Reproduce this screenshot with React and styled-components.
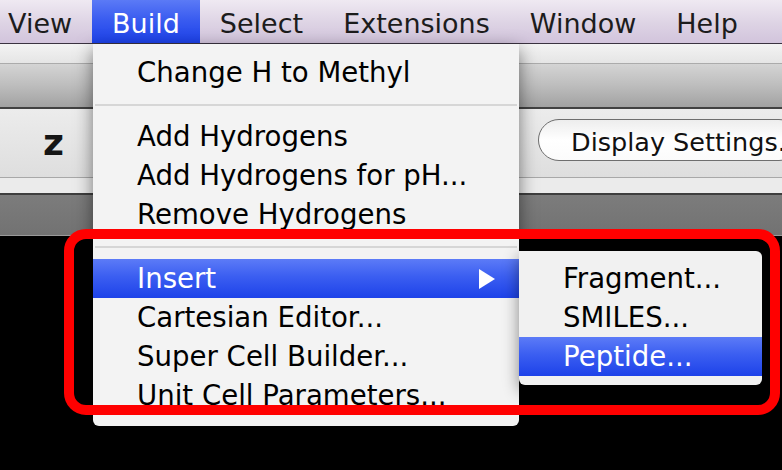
import React from "react";
import styled, { createGlobalStyle } from "styled-components";

const GlobalStyle = createGlobalStyle`
  html, body {
    margin: 0;
    padding: 0;
    background: #000;
  }
  body {
    font-family: "DejaVu Sans", Verdana, sans-serif;
  }
`;

const Screen = styled.div`
  position: relative;
  width: 782px;
  height: 470px;
  overflow: hidden;
  background: #000;
  font-family: "DejaVu Sans", Verdana, sans-serif;
`;

const MenuBar = styled.div`
  display: flex;
  height: 43px;
  border-bottom: 1px solid #3a3240;
  background: linear-gradient(180deg, #efe9f2 0%, #ddd3e4 55%, #d2c4dc 100%);
`;

const MenuTitle = styled.div`
  padding: 4px 20px 0;
  font-size: 27px;
  line-height: 39px;
  white-space: nowrap;
  color: ${(p) => (p.$open ? "#fff" : "#1c1c1c")};
  background: ${(p) =>
    p.$open
      ? "linear-gradient(180deg, #5b7af6 0%, #3a5cf0 45%, #1c41e9 100%)"
      : "transparent"};
  &:first-child {
    padding-left: 8px;
  }
`;

const Window = styled.div`
  display: flex;
  flex-direction: column;
`;

const TitleStrip = styled.div`
  height: 19px;
  background: linear-gradient(180deg, #f3f3f3, #e5e5e5);
  border-bottom: 1px solid #ababab;
`;

const ToolStrip = styled.div`
  height: 43px;
  background: linear-gradient(180deg, #d4d4d4 0%, #bdbdbd 50%, #a2a2a2 100%);
  border-bottom: 2px solid #424242;
`;

const ControlRow = styled.div`
  display: flex;
  align-items: center;
  height: 68px;
  padding-left: 43px;
  background: linear-gradient(180deg, #ececec, #dedede);
  border-bottom: 1px solid #a8a8a8;
`;

const AxisLabel = styled.span`
  font-size: 36px;
  font-weight: bold;
  line-height: 40px;
  color: #151515;
`;

// runs past the right edge of the window, as in the screenshot
const DisplayButton = styled.div`
  display: flex;
  align-items: center;
  box-sizing: border-box;
  width: 262px;
  height: 42px;
  margin: -6px -18px 0 auto;
  padding: 3px 0 0 32px;
  border: 1.5px solid #6e6e6e;
  border-radius: 21px;
  background: linear-gradient(180deg, #ededed 0%, #ffffff 50%, #fbfbfb 100%);
  font-size: 25.5px;
  color: #111;
  white-space: nowrap;
`;

const LowerStrip = styled.div`
  height: 15px;
  background: #ebebeb;
  border-bottom: 2px solid #3e3e3e;
`;

const StatusStrip = styled.div`
  height: 40px;
  background: linear-gradient(180deg, #7c7c7c, #727272);
  border-bottom: 1px solid #9a9a9a;
`;

const Dropdown = styled.div`
  position: absolute;
  left: 93px;
  top: 44px;
  width: 426px;
  padding: 9px 0 11px;
  background: #f3f3f3;
  border-radius: 0 0 6px 6px;
  box-shadow: 0 6px 18px rgba(0, 0, 0, 0.5);
`;

const Item = styled.div`
  position: relative;
  padding: 0 44px;
  font-size: 27.6px;
  line-height: 39px;
  white-space: nowrap;
  color: ${(p) => (p.$active ? "#fff" : "#000")};
  background: ${(p) =>
    p.$active
      ? "linear-gradient(180deg, #5c7bf7 0%, #3b5ef1 45%, #1d42e9 100%)"
      : "transparent"};
`;

const Separator = styled.div`
  height: 25px;
  display: flex;
  align-items: center;
  padding: 0 2px;
  &::after {
    content: "";
    flex: 1;
    height: 2px;
    background: #d6d6d6;
  }
`;

const Arrow = styled.span`
  position: absolute;
  right: 24px;
  top: 10px;
  width: 0;
  height: 0;
  border-left: 16px solid #fff;
  border-top: 10px solid transparent;
  border-bottom: 10px solid transparent;
`;

const Submenu = styled.div`
  position: absolute;
  left: 100%;
  top: -8px;
  width: 243px;
  padding: 8px 0 9px;
  background: #f1f1f1;
  border-radius: 0 6px 6px 6px;
  box-shadow: 0 6px 16px rgba(0, 0, 0, 0.45);
`;

const Callout = styled.div`
  position: absolute;
  left: 64px;
  top: 229px;
  width: 716px;
  height: 186px;
  box-sizing: border-box;
  border: 10px solid #ff0000;
  border-radius: 22px;
  pointer-events: none;
`;

const titles = ["View", "Build", "Select", "Extensions", "Window", "Help"];

const buildMenu = [
  ["Change H to Methyl"],
  null,
  ["Add Hydrogens", "Add Hydrogens for pH...", "Remove Hydrogens"],
  null,
  ["Insert", "Cartesian Editor...", "Super Cell Builder...", "Unit Cell Parameters..."],
];

const insertMenu = ["Fragment...", "SMILES...", "Peptide..."];

export default function App() {
  return (
    <Screen>
      <GlobalStyle />
      <MenuBar>
        {titles.map((t) => (
          <MenuTitle key={t} $open={t === "Build"}>
            {t}
          </MenuTitle>
        ))}
      </MenuBar>

      <Window>
        <TitleStrip />
        <ToolStrip />
        <ControlRow>
          <AxisLabel>z</AxisLabel>
          <DisplayButton>Display Settings...</DisplayButton>
        </ControlRow>
        <LowerStrip />
        <StatusStrip />
      </Window>

      <Dropdown>
        {buildMenu.map((group, i) =>
          group === null ? (
            <Separator key={i} />
          ) : (
            group.map((label) =>
              label === "Insert" ? (
                <Item key={label} $active>
                  {label}
                  <Arrow />
                  <Submenu>
                    {insertMenu.map((s) => (
                      <Item key={s} $active={s === "Peptide..."}>
                        {s}
                      </Item>
                    ))}
                  </Submenu>
                </Item>
              ) : (
                <Item key={label}>{label}</Item>
              )
            )
          )
        )}
      </Dropdown>

      <Callout />
    </Screen>
  );
}
